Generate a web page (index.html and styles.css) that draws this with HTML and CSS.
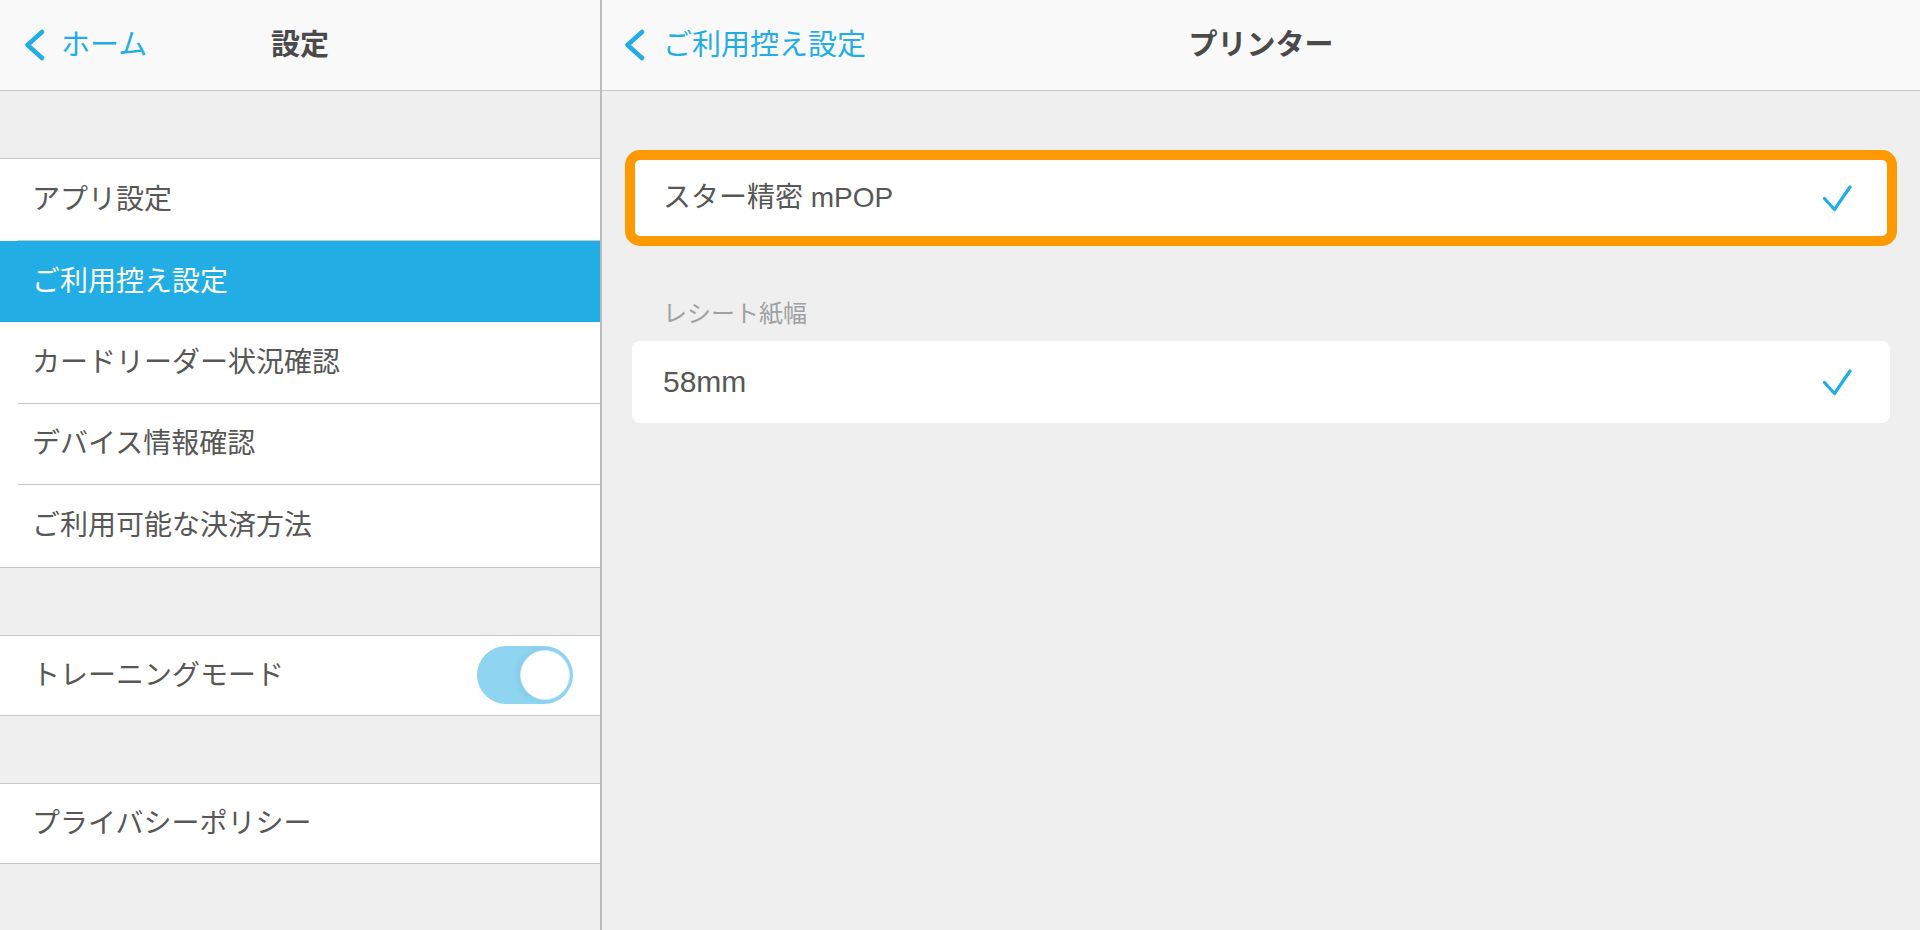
FILE: index.html
```html
<!DOCTYPE html>
<html lang="ja">
<head>
    <meta charset="UTF-8">
    <meta name="viewport" content="width=device-width, initial-scale=1.0">
    <title>設定 - プリンター</title>
    <link rel="stylesheet" href="styles.css">
</head>
<body>
    <div class="split-view">
        <aside class="master">
            <header class="nav-bar nav-bar--master">
                <a href="#" class="nav-back">
                    <svg class="chevron" width="21" height="32" viewBox="0 0 21 32"><path d="M18 3 L3.5 16 L18 29"/></svg>
                    <span>ホーム</span>
                </a>
                <h1 class="nav-title">設定</h1>
                <span></span>
            </header>

            <ul class="table-group">
                <li class="cell">アプリ設定</li>
                <li class="cell is-selected">ご利用控え設定</li>
                <li class="cell">カードリーダー状況確認</li>
                <li class="cell">デバイス情報確認</li>
                <li class="cell">ご利用可能な決済方法</li>
            </ul>

            <ul class="table-group table-group--single">
                <li class="cell">
                    トレーニングモード
                    <span class="switch is-on"><span class="switch-knob"></span></span>
                </li>
            </ul>

            <ul class="table-group table-group--single">
                <li class="cell">プライバシーポリシー</li>
            </ul>
        </aside>

        <main class="detail">
            <header class="nav-bar nav-bar--detail">
                <a href="#" class="nav-back">
                    <svg class="chevron" width="21" height="32" viewBox="0 0 21 32"><path d="M18 3 L3.5 16 L18 29"/></svg>
                    <span>ご利用控え設定</span>
                </a>
                <h1 class="nav-title">プリンター</h1>
                <span></span>
            </header>

            <div class="detail-body">
                <div class="option-card is-highlighted">
                    <span>スター精密 mPOP</span>
                    <svg class="check" width="30" height="28" viewBox="0 0 30 28"><path d="M2.5 14.5 L12.5 25.5 L28 3"/></svg>
                </div>

                <p class="section-label">レシート紙幅</p>
                <div class="option-card">
                    <span class="option-value">58mm</span>
                    <svg class="check" width="30" height="28" viewBox="0 0 30 28"><path d="M2.5 14.5 L12.5 25.5 L28 3"/></svg>
                </div>
            </div>
        </main>
    </div>
</body>
</html>
```

FILE: styles.css
```css
:root {
    --background: #efefef;
    --bar: #f9f9f9;
    --surface: #ffffff;
    --primary: #22aee4;
    --text: #575757;
    --title: #4a4a4a;
    --text-secondary: #a0a0a0;
    --line: #c8c8c8;
    --highlight: #ff9900;
}

html, body {
    margin: 0;
    height: 100%;
}

body {
    font-family: "Liberation Sans", "Noto Sans CJK JP", sans-serif;
    background-color: var(--background);
    color: var(--text);
    overflow: hidden;
}

.split-view {
    display: flex;
    height: 100vh;
}

.master {
    width: 602px;
    flex-shrink: 0;
    box-sizing: border-box;
    border-right: 2px solid #bcbcbc;
    background: var(--background);
}

.detail {
    flex: 1;
    background: var(--background);
}

/* navigation bar */
.nav-bar {
    height: 91px;
    box-sizing: border-box;
    background: var(--bar);
    border-bottom: 1px solid var(--line);
    display: grid;
    grid-template-columns: 1fr auto 1fr;
    align-items: center;
}

.nav-bar--master {
    padding: 0 24px;
}

.nav-bar--detail {
    padding: 0 22px;
}

.nav-back {
    display: flex;
    align-items: center;
    gap: 16px;
    color: var(--primary);
    text-decoration: none;
    font-size: 29px;
    line-height: 1.2;
    justify-self: start;
}

.nav-bar--detail .nav-back {
    gap: 18px;
}

.chevron path {
    fill: none;
    stroke: var(--primary);
    stroke-width: 4.5;
    stroke-linecap: round;
    stroke-linejoin: round;
}

.nav-title {
    margin: 0;
    font-size: 29px;
    font-weight: 700;
    line-height: 1.2;
    color: var(--title);
}

/* grouped table */
.table-group {
    list-style: none;
    margin: 67px 0 0;
    padding: 0;
    background: var(--surface);
    border-top: 1px solid var(--line);
    border-bottom: 1px solid var(--line);
}

.cell {
    height: 81.6px;
    box-sizing: border-box;
    margin-left: 18px;
    padding: 0 27px 0 14px;
    display: flex;
    align-items: center;
    justify-content: space-between;
    font-size: 28px;
    line-height: 1.2;
    border-bottom: 1px solid var(--line);
}

.cell:last-child {
    border-bottom: none;
}

.table-group--single .cell {
    height: 79px;
}

.cell.is-selected {
    margin-left: 0;
    padding-left: 32px;
    background: var(--primary);
    color: #ffffff;
    border-bottom: none;
}

/* toggle switch */
.switch {
    width: 96px;
    height: 58px;
    box-sizing: border-box;
    border-radius: 29px;
    padding: 4px 3px;
    background: #e3e3e3;
    display: flex;
    justify-content: flex-start;
}

.switch.is-on {
    background: #8fd4f0;
    justify-content: flex-end;
}

.switch-knob {
    width: 50px;
    height: 50px;
    box-sizing: border-box;
    border-radius: 50%;
    background: #ffffff;
    border: 1px solid #d6f0fb;
    box-shadow: -3px 0 5px rgba(60, 140, 180, 0.12);
}

/* detail content */
.detail-body {
    padding: 66px 30px 0;
}

.option-card {
    height: 82px;
    box-sizing: border-box;
    background: var(--surface);
    border-radius: 8px;
    padding: 0 38px 0 31px;
    display: flex;
    align-items: center;
    justify-content: space-between;
    font-size: 28px;
    line-height: 1.2;
}

.option-value {
    font-size: 30px;
}

.option-card.is-highlighted {
    outline: 10px solid var(--highlight);
    outline-offset: -3px;
}

.check path {
    fill: none;
    stroke: var(--primary);
    stroke-width: 3.2;
    stroke-linecap: round;
    stroke-linejoin: round;
}

.section-label {
    margin: 60px 0 12px;
    padding-left: 31px;
    font-size: 24px;
    line-height: 30px;
    color: var(--text-secondary);
}
```
